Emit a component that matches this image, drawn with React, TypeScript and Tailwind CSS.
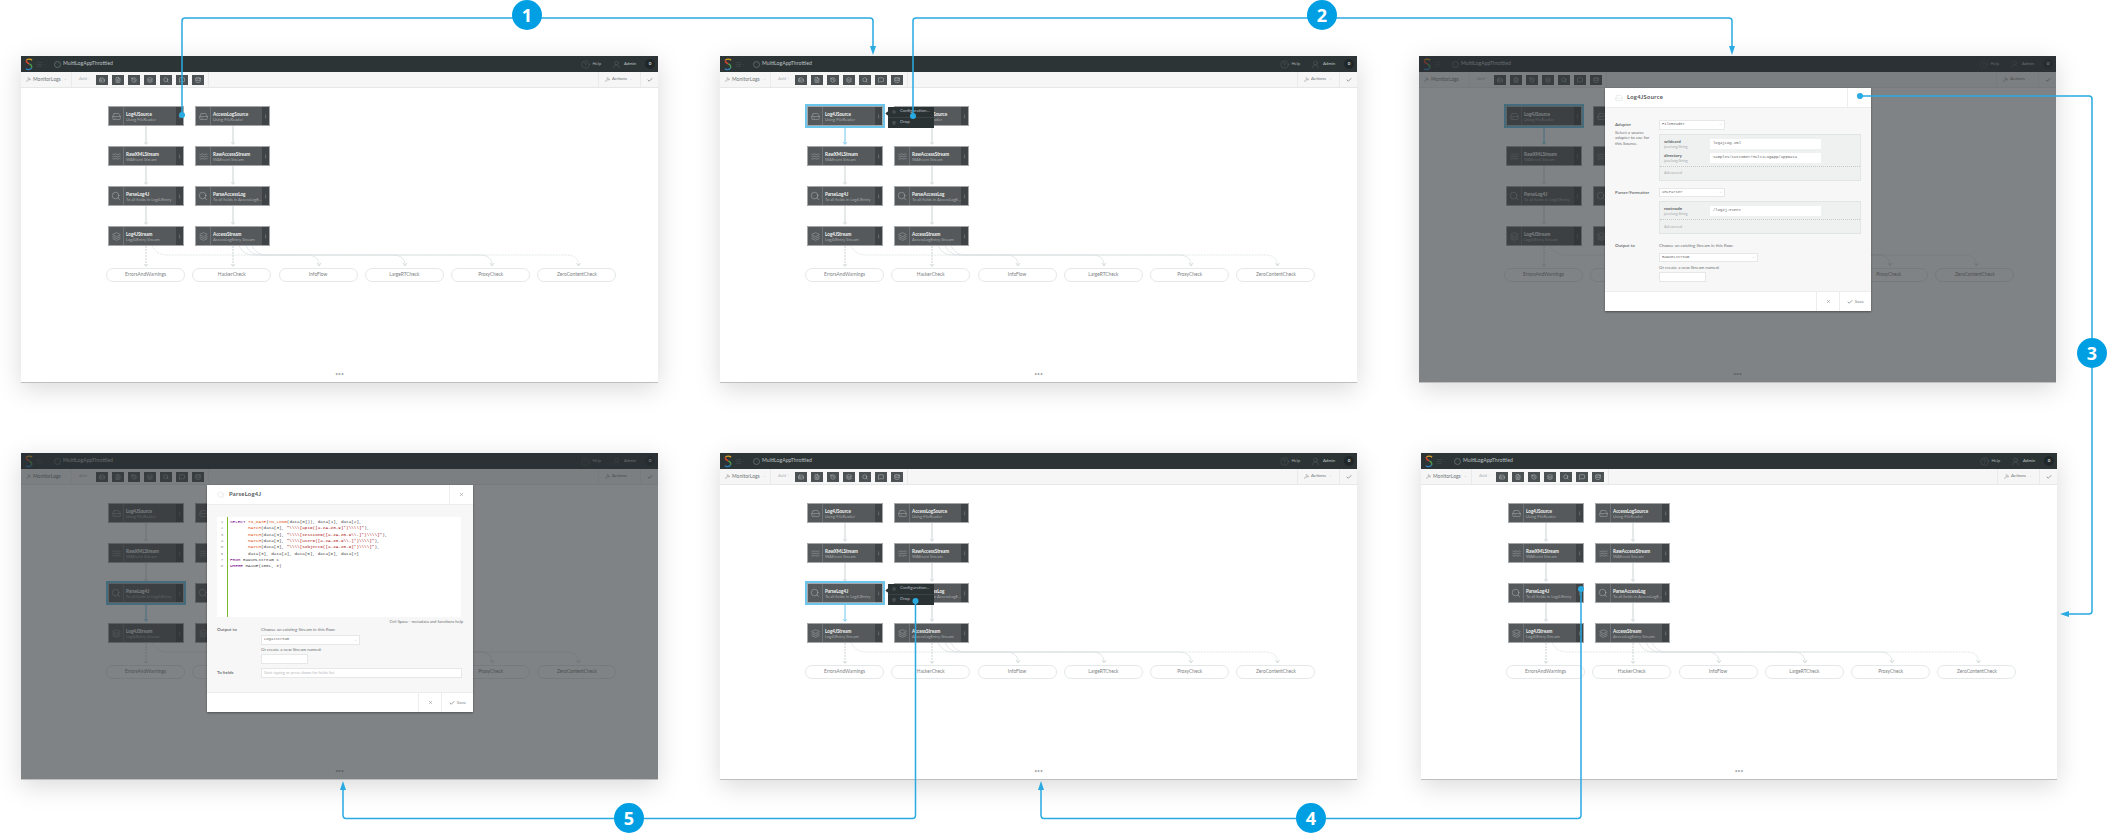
import { CSSProperties, ReactNode } from 'react'
import {
  Check,
  ChevronDown,
  ChevronRight,
  CircleHelp,
  Database,
  EllipsisVertical,
  FileText,
  Hammer,
  HardDrive,
  History,
  Layers,
  Menu,
  MessageSquare,
  Search,
  Settings,
  Trash2,
  UserRound,
  Waves,
  X,
} from 'lucide-react'

type NodeData = { name: string; sub: string; icon: 'source' | 'wave' | 'query' | 'stream' }

const leftNodes: NodeData[] = [
  { name: 'Log4JSource', sub: 'Using FileReader', icon: 'source' },
  { name: 'RawXMLStream', sub: 'WAEvent Stream', icon: 'wave' },
  { name: 'ParseLog4J', sub: 'To all fields in Log4JEntry', icon: 'query' },
  { name: 'Log4JStream', sub: 'Log4JEntry Stream', icon: 'stream' },
]

const rightNodes: NodeData[] = [
  { name: 'AccessLogSource', sub: 'Using FileReader', icon: 'source' },
  { name: 'RawAccessStream', sub: 'WAEvent Stream', icon: 'wave' },
  { name: 'ParseAccessLog', sub: 'To all fields in AccessLogE...', icon: 'query' },
  { name: 'AccessStream', sub: 'AccessLogEntry Stream', icon: 'stream' },
]

const outputs = ['ErrorsAndWarnings', 'HackerCheck', 'InfoFlow', 'LargeRTCheck', 'ProxyCheck', 'ZeroContentCheck']

const NodeIcon = ({ kind }: { kind: NodeData['icon'] }) => {
  if (kind === 'source') return <HardDrive size={9} strokeWidth={1} className="text-[#c6cacb]" />
  if (kind === 'wave') return <Waves size={9} strokeWidth={1} className="text-[#c6cacb]" />
  if (kind === 'query') return <Search size={10} strokeWidth={1} className="text-[#c6cacb]" />
  return <Layers size={9} strokeWidth={1} className="text-[#c6cacb]" />
}

function LogoMark() {
  return (
    <svg width="8" height="13" viewBox="0 0 8 13" fill="none" strokeWidth="1.4">
      <path d="M7 2.2C6 .9 2 .6 1.4 2.4" stroke="#d9a126" />
      <path d="M1.4 2.4C1 4.6 3 5.4 4.4 6" stroke="#d8452e" />
      <path d="M4.4 6C6.8 7 7.2 8.8 6.4 10" stroke="#4c9a4a" />
      <path d="M6.4 10C5.4 12 2 12 1 10.6" stroke="#2f7fb8" />
    </svg>
  )
}

function TopBar() {
  return (
    <div className="flex h-4 shrink-0 items-center bg-[#2c3436] pl-[4px] pr-[3px] text-[#aab0b2]">
      <LogoMark />
      <Menu size={7} strokeWidth={1} className="ml-[3px] text-[#5f686b]" />
      <ChevronDown size={3} className="text-[#5f686b]" />
      <span className="ml-[8px] flex h-[7px] w-[7px] items-center justify-center rounded-full border-[0.5px] border-[#5f686b]">
        <Check size={4} strokeWidth={1} className="text-[#5f686b]" />
      </span>
      <span className="ml-[1px] w-[50px] pl-[1px] text-[5.2px] text-[#bcc1c3]">MultiLogAppThrottled</span>
      <div className="ml-auto flex items-center">
        <CircleHelp size={9} strokeWidth={0.6} className="text-[#889093]" />
        <span className="ml-[2px] text-[4.2px]">Help</span>
        <UserRound size={9} strokeWidth={0.6} className="ml-[11px] text-[#889093]" />
        <span className="ml-[3px] text-[4.2px] text-[#c3c8ca]">Admin</span>
        <span className="ml-[9px] flex h-[10px] w-[10px] items-center justify-center rounded-full bg-[#1f2729] text-[4.5px] font-bold text-[#d9dcdd]">
          0
        </span>
      </div>
    </div>
  )
}

const toolIcons = [HardDrive, FileText, History, Layers, Search, MessageSquare, Database]

function ToolBar() {
  return (
    <div className="flex h-4 shrink-0 items-center border-b border-[#e6e8e8] bg-[#f6f6f6] text-[#71777a]">
      <div className="flex h-full w-[51px] items-center border-r border-[#eaeaea] pl-[5px]">
        <Hammer size={5} strokeWidth={1.2} className="text-[#555]" />
        <span className="ml-[2px] text-[5px]">MonitorLogs</span>
        <ChevronDown size={3} className="ml-[3px] text-[#aaa]" />
      </div>
      <div className="flex h-full w-[137px] items-center border-r border-[#eaeaea] pl-[7px]">
        <span className="w-[17px] text-[4.5px] text-[#b4b8ba]">
          Add <ChevronRight size={3} className="inline" />
        </span>
        <div className="flex gap-[3.7px]">
          {toolIcons.map((Icon, i) => (
            <span key={i} className="flex h-[10px] w-[12.3px] items-center justify-center bg-[#4c5153]">
              <Icon size={6} strokeWidth={1.4} className="text-[#e8eaea]" />
            </span>
          ))}
        </div>
      </div>
      <div className="ml-auto flex h-full items-center">
        <div className="flex h-full w-[42px] items-center border-l border-[#eaeaea] pl-[6px]">
          <Hammer size={5} strokeWidth={1.2} className="text-[#555]" />
          <span className="ml-[2px] text-[4.5px]">Actions</span>
          <ChevronDown size={3} className="ml-[3px] text-[#bbb]" />
        </div>
        <div className="flex h-full w-[18px] items-center justify-center border-l border-[#eaeaea]">
          <Check size={6} strokeWidth={2} className="text-[#3d4345]" />
        </div>
      </div>
    </div>
  )
}

function ContextMenu() {
  return (
    <div className="absolute left-[80px] top-0 z-10 h-[21px] w-[46px] bg-[#2a3234] text-[#b9bec0]">
      <span className="absolute -left-[2px] top-[5px] h-[3px] w-[3px] rotate-45 bg-[#2a3234]" />
      <div className="flex h-[10.5px] items-center border-b border-[#3a4345] pl-[4px]">
        <Settings size={4} strokeWidth={1} />
        <span className="ml-[4px] text-[4.4px]">Configuration...</span>
      </div>
      <div className="flex h-[10px] items-center pl-[4px]">
        <Trash2 size={4} strokeWidth={1} />
        <span className="ml-[4px] text-[4.4px]">Drop</span>
      </div>
    </div>
  )
}

function FlowNode({ node, selected, menu }: { node: NodeData; selected?: boolean; menu?: boolean }) {
  return (
    <div
      className={`relative flex h-5 border-[0.5px] border-[#a3a7a9] bg-[#55595b] ${selected ? 'shadow-[0_0_0_2px_#6cc6ec]' : ''}`}
    >
      <div className="flex w-[15px] shrink-0 items-center justify-center border-r-[0.5px] border-[#6e7274]">
        <NodeIcon kind={node.icon} />
      </div>
      <div className="min-w-0 flex-1 pl-[2px] pt-[4px] leading-[6px]">
        <div className="whitespace-nowrap text-[4.6px] font-bold text-[#f2f3f3]">{node.name}</div>
        <div className="whitespace-nowrap text-[4.1px] text-[#a6aaac]">{node.sub}</div>
      </div>
      <div className="flex w-[7px] shrink-0 items-center justify-center bg-[#3f4345]">
        <EllipsisVertical size={5} strokeWidth={1} className="text-[#c3c6c7]" />
      </div>
      {menu && <ContextMenu />}
    </div>
  )
}

function Link({ h = 20, dashed, blue }: { h?: number; dashed?: boolean; blue?: boolean }) {
  const color = blue ? '#6cc6ec' : '#ccd2d4'
  return (
    <svg width="6" height={h} viewBox={`0 0 6 ${h}`} className="mx-auto block" fill="none">
      <path d={`M3 0V${h - 2}`} stroke={color} strokeDasharray={dashed ? '2 1' : undefined} />
      <path d={`M1 ${h - 4}L3 ${h - 1.5}L5 ${h - 4}`} stroke={color} strokeWidth="0.7" />
    </svg>
  )
}

function NodeColumn({ nodes, width, active, menu }: { nodes: NodeData[]; width: string; active?: number; menu?: boolean }) {
  return (
    <div className={width}>
      {nodes.map((node, i) => (
        <div key={node.name}>
          <FlowNode node={node} selected={active === i} menu={menu && active === i} />
          <Link h={i === 3 ? 22 : 20} dashed={i === 3} blue={active === i} />
        </div>
      ))}
    </div>
  )
}

// curved links from the two stream nodes to the output pills
function OutputCurves() {
  const curves = [
    { from: 131, to: 557.5, dash: true },
    { from: 218, to: 298 },
    { from: 225, to: 384 },
    { from: 231, to: 471 },
  ]
  return (
    <svg className="absolute left-0 top-0" width="637" height="200" fill="none">
      {curves.map((c) => (
        <g key={c.to} stroke="#dbe1e2" strokeWidth="0.8">
          <path
            d={`M${c.from} 157C${c.from + 2} 163 ${c.from + 7} 167 ${c.from + 15} 167L${c.to - 12} 167C${c.to - 4} 167 ${c.to} 171 ${c.to} 177`}
            strokeDasharray={c.dash ? '2 1' : undefined}
          />
          <path d={`M${c.to - 2} 175L${c.to} 178L${c.to + 2} 175`} stroke="#ccd2d4" />
        </g>
      ))}
    </svg>
  )
}

function Canvas({ active, menu }: { active?: number; menu?: boolean }) {
  return (
    <div className="relative flex flex-1 flex-col bg-white pl-[87px] pt-[18px]">
      <OutputCurves />
      <div className="relative flex gap-[11px]">
        <NodeColumn nodes={leftNodes} width="w-[76px]" active={active} menu={menu} />
        <NodeColumn nodes={rightNodes} width="w-[75px]" />
      </div>
      <div className="relative -ml-[2px] flex gap-[7.3px]">
        {outputs.map((name) => (
          <div
            key={name}
            className="flex h-[14px] w-[79px] items-center justify-center rounded-full border-[0.5px] border-[#e4e8e9] bg-white text-[4.8px] text-[#7c8284]"
          >
            {name}
          </div>
        ))}
      </div>
      <div className="-ml-[87px] mt-auto pb-[5px] text-center text-[5px] leading-[5px] text-[#a9adaf]">•••</div>
    </div>
  )
}

const Label = ({ children, className = '' }: { children: ReactNode; className?: string }) => (
  <div className={`text-[4.5px] font-semibold leading-[6px] text-[#5e6466] ${className}`}>{children}</div>
)

const Hint = ({ children, className = '' }: { children: ReactNode; className?: string }) => (
  <div className={`text-[4.4px] leading-[5.3px] text-[#6d7274] ${className}`}>{children}</div>
)

function SelectBox({ value, width }: { value: string; width: string }) {
  return (
    <div className={`flex h-[9.5px] items-center justify-between border-[0.5px] border-[#e6e8e8] bg-white px-[2px] font-['Liberation_Mono',monospace] text-[3.8px] text-[#666] ${width}`}>
      {value}
      <ChevronDown size={3} className="text-[#aaa]" />
    </div>
  )
}

function Field({ name, value }: { name: string; value: string }) {
  return (
    <div className="flex h-[10px] items-center">
      <div className="w-[50px] pl-[4px]">
        <div className="text-[4.4px] font-bold leading-[5px] text-[#5e6466]">{name}</div>
        <div className="text-[3.6px] leading-[5px] text-[#a5a9ab]">java.lang.String</div>
      </div>
      <div className="flex h-[10px] w-[111px] items-center bg-white pl-[3px] font-['Liberation_Mono',monospace] text-[3.9px] text-[#666]">
        {value}
      </div>
    </div>
  )
}

function ConfigPanel({ fields, className = '' }: { fields: { name: string; value: string }[]; className?: string }) {
  return (
    <div className={`w-[202px] border-[0.5px] border-[#e2e5e5] bg-[#eff1f1] ${className}`}>
      <div className="flex flex-col gap-[4.3px] pb-[3px] pt-[4px]">
        {fields.map((f) => (
          <Field key={f.name} name={f.name} value={f.value} />
        ))}
      </div>
      <div className="flex h-[14px] items-center border-t-[0.5px] border-dotted border-[#c4c8c9] pl-[4px] text-[4.2px] text-[#abafb1]">
        Advanced
      </div>
    </div>
  )
}

function ModalShell({ title, icon, height, children }: { title: string; icon: ReactNode; height: string; children: ReactNode }) {
  return (
    <div className={`absolute left-[186px] top-[32px] z-20 flex w-[266px] flex-col bg-white shadow-[0_1px_2px_rgba(0,0,0,0.4)] ${height}`}>
      <div className="flex h-5 shrink-0 items-center border-b border-[#eceeee]">
        <span className="ml-[10px] text-[#c9cdce]">{icon}</span>
        <span className="ml-[4px] text-[5.8px] font-bold tracking-[0.3px] text-[#55595b]">{title}</span>
        <div className="ml-auto flex h-full w-[24px] items-center justify-center border-l border-[#eceeee]">
          <X size={5} strokeWidth={1.6} className="text-[#55595b]" />
        </div>
      </div>
      <div className="flex-1 bg-[#f7f7f7] px-[10px]">{children}</div>
      <div className="flex h-5 shrink-0 justify-end border-t border-[#eceeee] bg-white">
        <div className="flex h-full w-[23px] items-center justify-center border-l border-[#eceeee]">
          <X size={5} strokeWidth={1.6} className="text-[#55595b]" />
        </div>
        <div className="flex h-full w-[32px] items-center justify-center border-l border-[#eceeee]">
          <Check size={6} strokeWidth={2} className="text-[#3d4345]" />
          <span className="ml-[2px] text-[4.6px] text-[#7c8284]">Save</span>
        </div>
      </div>
    </div>
  )
}

function SourceModal() {
  return (
    <ModalShell title="Log4JSource" icon={<HardDrive size={8} strokeWidth={1} />} height="h-[223px]">
      <div className="flex pt-[12px]">
        <div className="w-[44px]">
          <Label className="mt-[2px]">Adapter</Label>
          <Hint className="mt-[2px]">
            Select a source
            <br />
            adapter to use for
            <br />
            this Source.
          </Hint>
        </div>
        <div>
          <SelectBox value="FileReader" width="w-[66px]" />
          <ConfigPanel
            className="mt-[4px]"
            fields={[
              { name: 'wildcard', value: 'log4jLog.xml' },
              { name: 'directory', value: 'Samples/Customer/MultiLogApp/appData' },
            ]}
          />
        </div>
      </div>
      <div className="mt-[7px] flex">
        <div className="w-[44px]">
          <Label className="mt-[2px] text-[4.3px]">Parser/Formatter</Label>
        </div>
        <div>
          <SelectBox value="XMLParser" width="w-[66px]" />
          <ConfigPanel className="mt-[4px]" fields={[{ name: 'rootnode', value: '/log4j:event' }]} />
        </div>
      </div>
      <div className="mt-[9px] flex">
        <div className="w-[44px]">
          <Label>Output to</Label>
        </div>
        <div>
          <Hint>Choose an existing Stream in this flow:</Hint>
          <SelectBox value="RawXMLStream" width="mt-[4px] w-[99px]" />
          <Hint className="mt-[3px]">Or create a new Stream named:</Hint>
          <div className="mt-[2px] h-[10px] w-[47px] border-[0.5px] border-[#e6e8e8] bg-white" />
        </div>
      </div>
    </ModalShell>
  )
}

const K = ({ children }: { children: ReactNode }) => <span className="text-[#770088]">{children}</span>
const F = ({ children }: { children: ReactNode }) => <span className="text-[#e0561b]">{children}</span>
const Q = ({ children }: { children: ReactNode }) => <span className="text-[#aa1111]">{children}</span>

const codeLines: ReactNode[] = [
  <><K>SELECT</K> <F>TO_DATE</F>(<F>TO_LONG</F>(data[0])), data[1], data[2],</>,
  <>{'       '}<F>MATCH</F>(data[3], <Q>{'"\\\\\\\\[api=([a-zA-Z0-9]*)\\\\\\\\]"'}</Q>),</>,
  <>{'       '}<F>MATCH</F>(data[3], <Q>{'"\\\\\\\\[session=([a-zA-Z0-9\\\\-]*)\\\\\\\\]"'}</Q>),</>,
  <>{'       '}<F>MATCH</F>(data[3], <Q>{'"\\\\\\\\[user=([a-zA-Z0-9\\\\-]*)\\\\\\\\]"'}</Q>),</>,
  <>{'       '}<F>MATCH</F>(data[3], <Q>{'"\\\\\\\\[sobject=([a-zA-Z0-9]*)\\\\\\\\]"'}</Q>),</>,
  <>{'       '}data[3], data[4], data[5], data[6], data[7]</>,
  <><K>FROM</K> RawXMLStream c</>,
  <><K>WHERE</K> MAXUE(100L, e)</>,
]

function QueryModal() {
  return (
    <ModalShell title="ParseLog4J" icon={<Search size={8} strokeWidth={1} />} height="h-[227px]">
      <div className="pt-[12px]">
        <div className="flex h-[100px] w-[244px] bg-white font-['Liberation_Mono',monospace] text-[4.3px] leading-[6.33px]">
          <div className="w-[10px] pt-[2px] text-center text-[#999]">
            {codeLines.map((_, i) => (
              <div key={i}>{i + 1}</div>
            ))}
          </div>
          <div className="flex-1 whitespace-pre border-l border-[#7ab92a] pl-[2px] pt-[2px] text-[#444]">
            {codeLines.map((line, i) => (
              <div key={i}>{line}</div>
            ))}
          </div>
        </div>
        <div className="mt-[2px] w-[246px] text-right text-[4.1px] leading-[5px] text-[#6d7274]">
          Ctrl-Space - metadata and functions help
        </div>
        <div className="mt-[3px] flex">
          <div className="w-[44px]">
            <Label>Output to</Label>
          </div>
          <div>
            <Hint>Choose an existing Stream in this flow:</Hint>
            <SelectBox value="Log4JStream" width="mt-[3px] w-[99px]" />
            <Hint className="mt-[2px]">Or create a new Stream named:</Hint>
            <div className="mt-[2px] h-[10px] w-[47px] border-[0.5px] border-[#e6e8e8] bg-white" />
          </div>
        </div>
        <div className="mt-[4px] flex items-center">
          <div className="w-[44px]">
            <Label>To fields</Label>
          </div>
          <div className="flex h-[10px] w-[201px] items-center border-[0.5px] border-[#e6e8e8] bg-white pl-[2px] text-[4.1px] text-[#b9bcbe]">
            Start typing or press down for fields list
          </div>
        </div>
      </div>
    </ModalShell>
  )
}

function AppWindow({
  active,
  menu,
  dim,
  modal,
  className = '',
}: {
  active?: number
  menu?: boolean
  dim?: boolean
  modal?: ReactNode
  className?: string
}) {
  return (
    <div className={`relative flex h-[327px] flex-col border-b border-[#bdbfc0] font-['Lato',sans-serif] shadow-[0_6px_24px_rgba(0,0,0,0.15)] ${className}`}>
      <TopBar />
      <ToolBar />
      <Canvas active={active} menu={menu} />
      {dim && <div className="absolute inset-0 z-10 bg-[#2c3134]/60" />}
      {modal}
    </div>
  )
}

function StepBadge({ n, style }: { n: number; style: CSSProperties }) {
  return (
    <div
      style={style}
      className="absolute z-40 flex h-[30px] w-[30px] items-center justify-center rounded-full bg-[#009fe3] font-['Open_Sans',sans-serif] text-[18px] font-bold text-white"
    >
      {n}
    </div>
  )
}

// numbered blue arrows that run between the six windows
function StepArrows() {
  const blue = '#29abe2'
  return (
    <svg className="absolute left-0 top-0 z-30" width="2108" height="833" fill="none">
      <g stroke={blue} strokeWidth="1.5">
        <path d="M182 115V21Q182 18 185 18H870Q873 18 873 21V48" />
        <path d="M913 116V21Q913 18 916 18H1729Q1732 18 1732 21V48" />
        <path d="M1860 96H2089Q2092 96 2092 99V611Q2092 614 2089 614H2066" />
        <path d="M1581 589V815Q1581 818.500 1578 818.500H1044Q1041 818.500 1041 815V788" />
        <path d="M915.500 601V815Q915.500 818.500 912.500 818.500H346Q343 818.500 343 815V788" />
      </g>
      <g fill={blue}>
        <circle cx="182" cy="115" r="3" />
        <circle cx="913" cy="116" r="3" />
        <circle cx="1860" cy="96" r="3" />
        <circle cx="1581" cy="589" r="3" />
        <circle cx="915.500" cy="601" r="3" />
        <path d="M870 46H876L873 55Z" />
        <path d="M1729 46H1735L1732 55Z" />
        <path d="M2069 611V617L2060 614Z" />
        <path d="M1038 790H1044L1041 781Z" />
        <path d="M340 790H346L343 781Z" />
      </g>
    </svg>
  )
}

export default function App() {
  return (
    <div className="relative h-[833px] w-[2108px] overflow-hidden bg-white">
      <div className="grid grid-cols-[repeat(3,637px)] gap-x-[62px] gap-y-[70px] pl-[21px] pt-[56px]">
        <AppWindow />
        <AppWindow active={0} menu />
        <AppWindow active={0} dim modal={<SourceModal />} />
        <AppWindow active={2} dim modal={<QueryModal />} />
        <AppWindow active={2} menu />
        <AppWindow className="ml-[2px] w-[636px]" />
      </div>
      <StepArrows />
      <StepBadge n={1} style={{ left: 512, top: 0 }} />
      <StepBadge n={2} style={{ left: 1307, top: 0 }} />
      <StepBadge n={3} style={{ left: 2077, top: 338 }} />
      <StepBadge n={4} style={{ left: 1296, top: 803 }} />
      <StepBadge n={5} style={{ left: 614, top: 803 }} />
    </div>
  )
}
